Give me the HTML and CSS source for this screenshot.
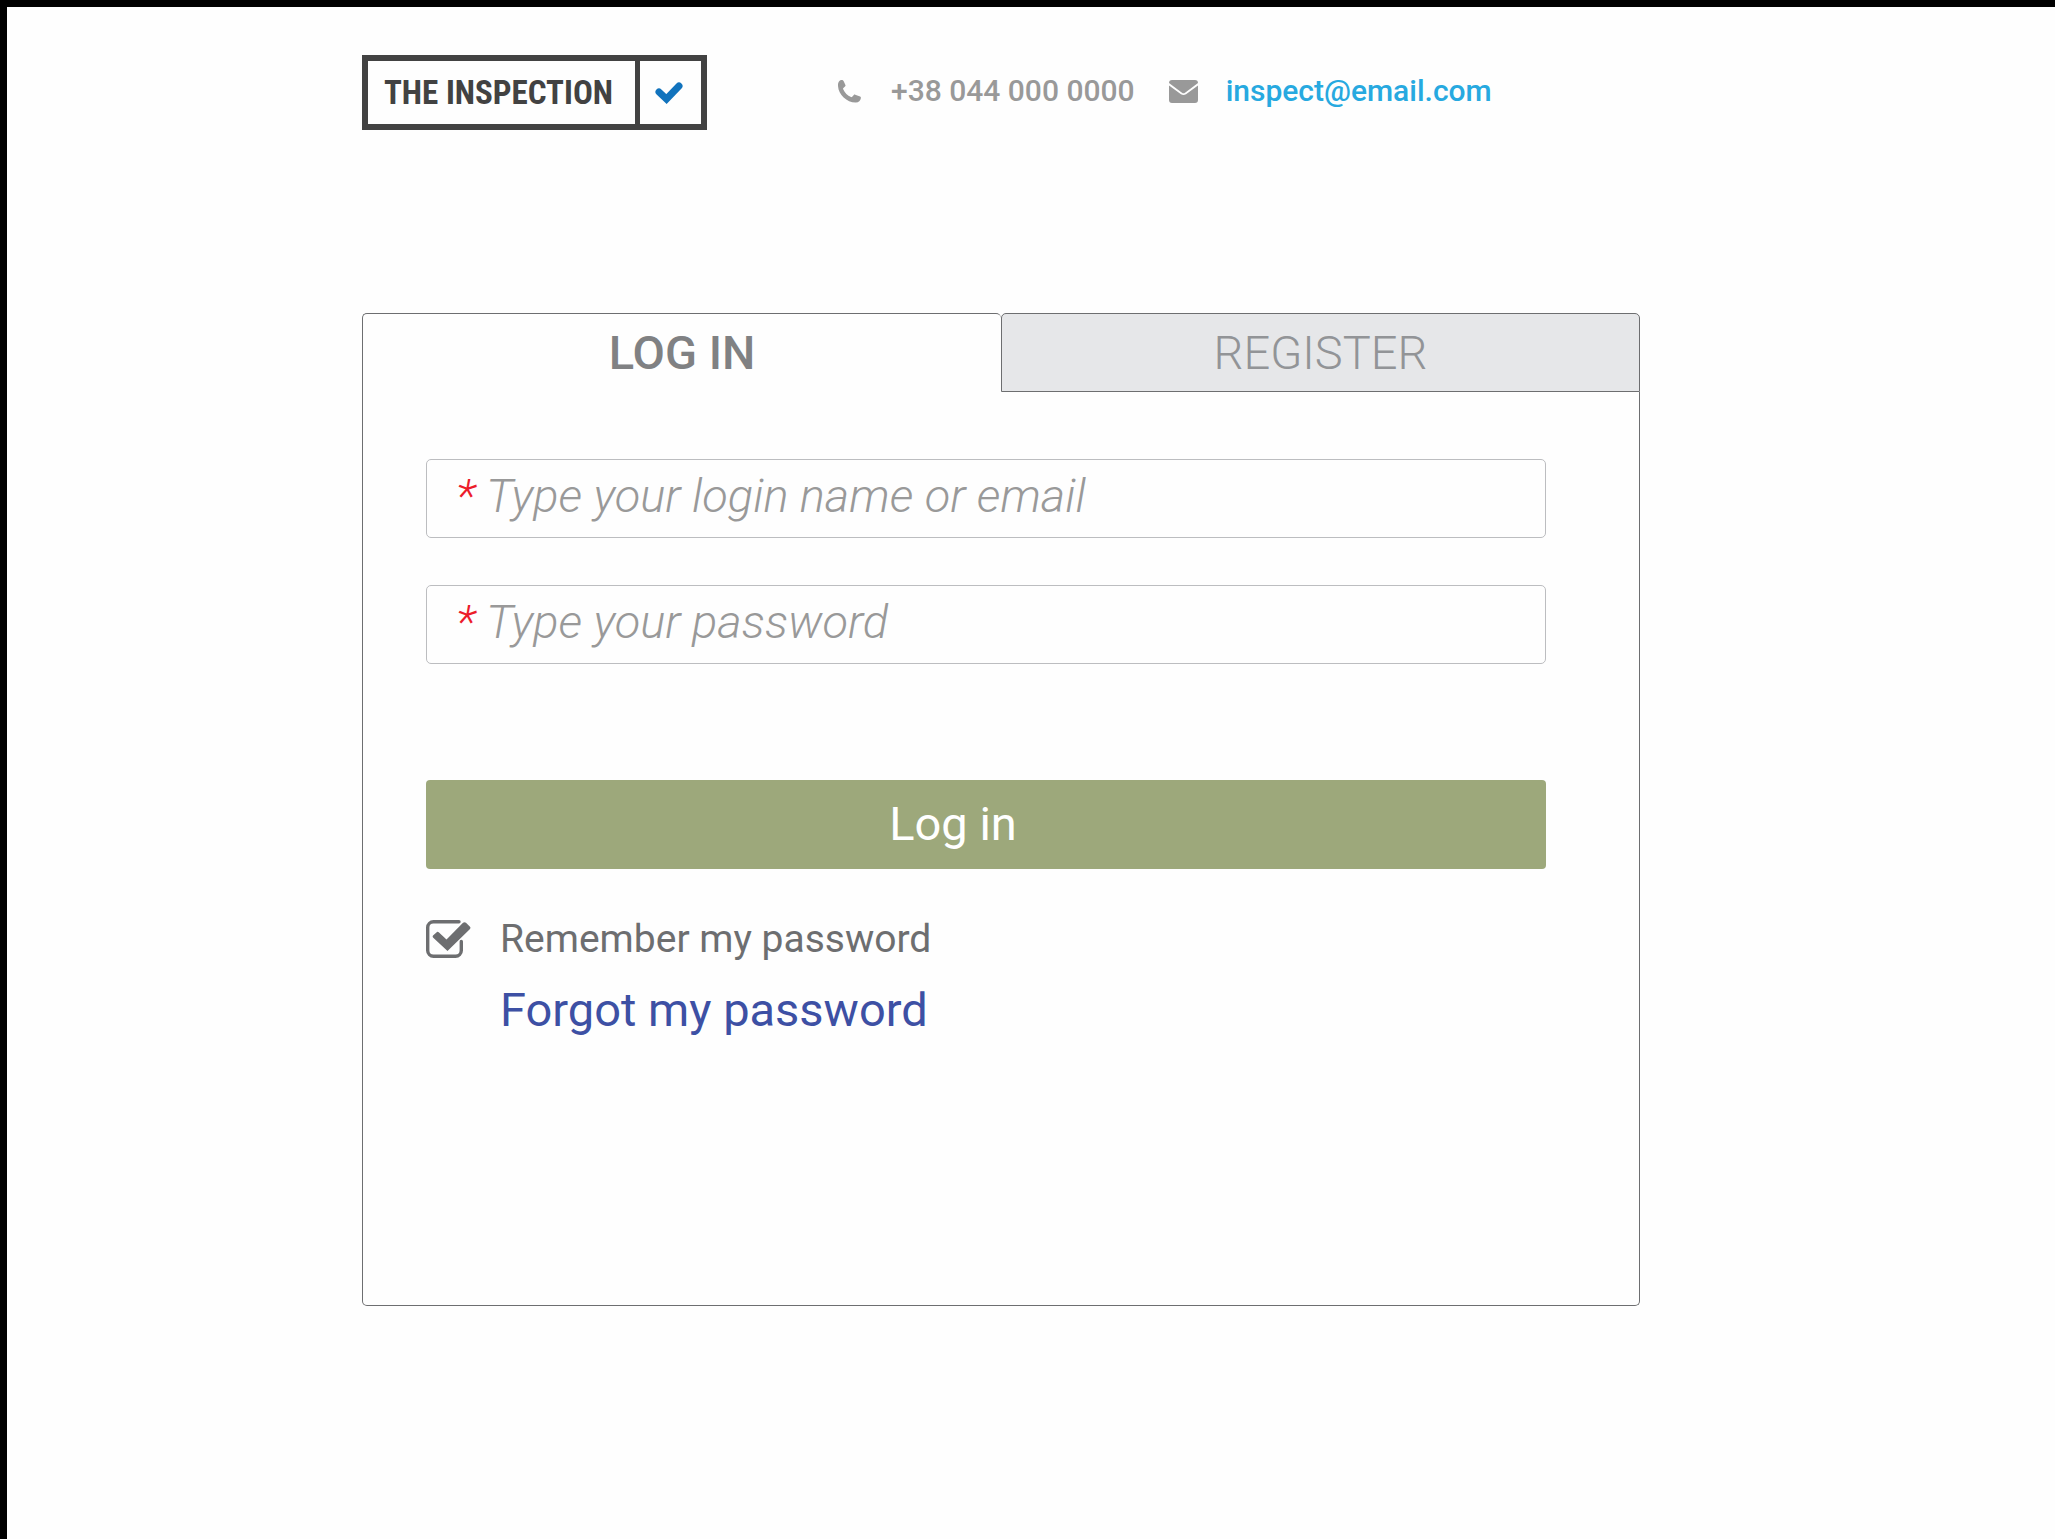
FILE: index.html
```html
<!DOCTYPE html>
<html lang="en">
<head>
  <meta charset="utf-8">
  <meta name="viewport" content="width=device-width, initial-scale=1">
  <title>The Inspection – Log in</title>
  <link rel="stylesheet" href="styles.css">
</head>
<body>
  <div class="page">
    <header class="header">
      <a class="logo" href="#">
        <span class="logo-name">THE INSPECTION</span>
        <span class="logo-mark">
          <svg width="28" height="22" viewBox="0 0 28 22" aria-hidden="true"><path d="M4 10l7.500 7L24 4" fill="none" stroke="#1173bd" stroke-width="7" stroke-linecap="round"/></svg>
        </span>
      </a>
      <address class="contacts">
        <span class="contact">
          <svg class="contact-phone" viewBox="0 0 23 23" aria-hidden="true"><path d="M1 1.500C2 .3 3.600-.2 4.800.2c.5.200.700.500.900 1L7.400 5c.3.700.1 1.200-.4 1.600L5.400 8c-.4.400-.4.800-.2 1.200 1.600 3.600 4.300 6.200 7.800 7.800.5.200.9.200 1.200-.2l1.600-1.800c.4-.4.900-.5 1.400-.3l4.900 1.900c.6.300.9.700.8 1.300-.3 2.700-2.300 4.600-5 4.700C8.500 22.800-.5 13.800 0 4.600.1 3.400.300 2.300 1 1.500z" fill="currentColor"/></svg>
          +38 044 000 0000
        </span>
        <span class="contact">
          <svg class="contact-mail" viewBox="0 0 29 24" aria-hidden="true"><path d="M3 1h23a3 3 0 0 1 3 3L16 13.700q-1.500 1-3 0L0 4a3 3 0 0 1 3-3zM0 6.500l12 8.800q2.500 1.600 5 0l12-8.800V21a3 3 0 0 1-3 3H3a3 3 0 0 1-3-3z" fill="currentColor"/></svg>
          <a class="contact-link" href="mailto:inspect@email.com">inspect@email.com</a>
        </span>
      </address>
    </header>

    <main class="card">
      <div class="tabs" role="tablist">
        <button class="tab tab-active" type="button" role="tab" aria-selected="true">LOG IN</button>
        <button class="tab tab-idle" type="button" role="tab" aria-selected="false">REGISTER</button>
      </div>
      <form class="panel">
        <label class="field">
          <span class="required">*</span>
          <input class="field-input" type="text" placeholder="Type your login name or email" aria-label="Login name or email">
        </label>
        <label class="field">
          <span class="required">*</span>
          <input class="field-input" type="password" placeholder="Type your password" aria-label="Password">
        </label>
        <button class="submit" type="submit">Log in</button>
        <div class="options">
          <label class="remember">
            <span class="check">
              <input class="check-input" type="checkbox" checked>
              <svg class="check-icon" viewBox="0 0 45 38" aria-hidden="true"><path d="M33 1.700H7.500a5.800 5.800 0 0 0-5.800 5.800v23a5.800 5.800 0 0 0 5.800 5.800h22a5.800 5.800 0 0 0 5.800-5.800V21.500" fill="none" stroke="currentColor" stroke-width="3.400" stroke-linecap="round"/><path d="M7 15.500l4-3.500q1-.5 2 .5l7.500 7L37 2.800q1.500-1.300 3 0l4 4q1 1 0 2.200L21.500 31 7 17.500q-.8-1 0-2z" fill="currentColor"/></svg>
            </span>
            Remember my password
          </label>
          <a class="forgot" href="#">Forgot my password</a>
        </div>
      </form>
    </main>
  </div>
</body>
</html>
```
FILE: styles.css
```css
* {
  box-sizing: border-box;
}

body {
  margin: 0;
  min-height: 100vh;
  border-top: 7px solid #000;
  border-left: 7px solid #000;
  background: #fefefe;
  font-family: Roboto, "Liberation Sans", sans-serif;
}

button,
input {
  font: inherit;
}

.page {
  display: grid;
  grid-template-columns: 355fr minmax(0, 1278fr) 415fr;
  row-gap: 183px;
  padding: 48px 0;
}

.header,
.card {
  grid-column: 2;
}

.header {
  display: flex;
  align-items: center;
  gap: 131px;
}

.logo {
  display: flex;
  height: 75px;
  border: 6px solid #424242;
  color: #424242;
  text-decoration: none;
}

.logo-name {
  display: flex;
  align-items: center;
  justify-content: center;
  width: 267px;
  padding-right: 6px;
  font-family: "Roboto Condensed", "Liberation Sans Narrow", Roboto, sans-serif;
  font-size: 33px;
  font-weight: 700;
}

.logo-mark {
  display: flex;
  align-items: center;
  justify-content: center;
  width: 66px;
  padding-right: 3px;
  border-left: 5px solid #424242;
}

.contacts {
  display: flex;
  gap: 34px;
  padding-bottom: 3px;
  color: #999;
  font-size: 30px;
  font-style: normal;
  font-weight: 500;
  line-height: 36px;
}

.contact {
  display: flex;
  align-items: center;
  gap: 28px;
  white-space: nowrap;
}

.contact-phone {
  width: 23px;
  height: 23px;
  margin-right: 2px;
}

.contact-mail {
  width: 29px;
  height: 24px;
}

.contact-link {
  color: #27a9e0;
  text-decoration: none;
}

.tabs {
  display: grid;
  grid-template-columns: 1fr 1fr;
}

.tab {
  height: 79px;
  padding: 0;
  border: 1px solid #6d6e70;
  border-radius: 5px 5px 0 0;
  font-size: 47px;
  line-height: 76px;
}

.tab-active {
  border-right: 0;
  border-bottom: 0;
  background: #fefefe;
  color: #808183;
  font-weight: 500;
}

.tab-idle {
  background: #e6e7e9;
  color: #929497;
  font-weight: 300;
}

.panel {
  display: flex;
  flex-direction: column;
  gap: 47px;
  min-height: 914px;
  padding: 67px 93px 67px 63px;
  border: 1px solid #6d6e70;
  border-top: 0;
  border-radius: 0 0 5px 5px;
}

.field {
  display: flex;
  height: 79px;
  padding: 0 29px;
  border: 1px solid #bcbdc0;
  border-radius: 5px;
  font-size: 47px;
  font-style: italic;
  font-weight: 300;
  line-height: 72px;
}

.required {
  width: 30px;
  color: #ec1c2b;
}

.field-input {
  flex: 1;
  min-width: 0;
  height: 72px;
  padding: 0;
  border: 0;
  outline: 0;
  background: transparent;
  color: #999;
}

.field-input::placeholder {
  color: #999;
  opacity: 1;
}

.submit {
  height: 89px;
  margin-top: 69px;
  padding: 0 66px 2px 0;
  border: 0;
  border-radius: 4px;
  background: #9da87b;
  color: #fff;
  font-size: 47px;
}

.options {
  display: flex;
  flex-direction: column;
  align-items: flex-start;
}

.remember {
  display: flex;
  align-items: center;
  gap: 28px;
  color: #6d6e70;
  font-size: 39px;
  line-height: 46px;
}

.check {
  display: grid;
  width: 46px;
}

.check-input,
.check-icon {
  grid-area: 1 / 1;
  width: 45px;
  height: 38px;
  margin: 0;
}

.check-input {
  opacity: 0;
}

.forgot {
  margin: 20px 0 0 74px;
  color: #3d50a4;
  font-size: 47px;
  line-height: 56px;
  text-decoration: none;
}
```
